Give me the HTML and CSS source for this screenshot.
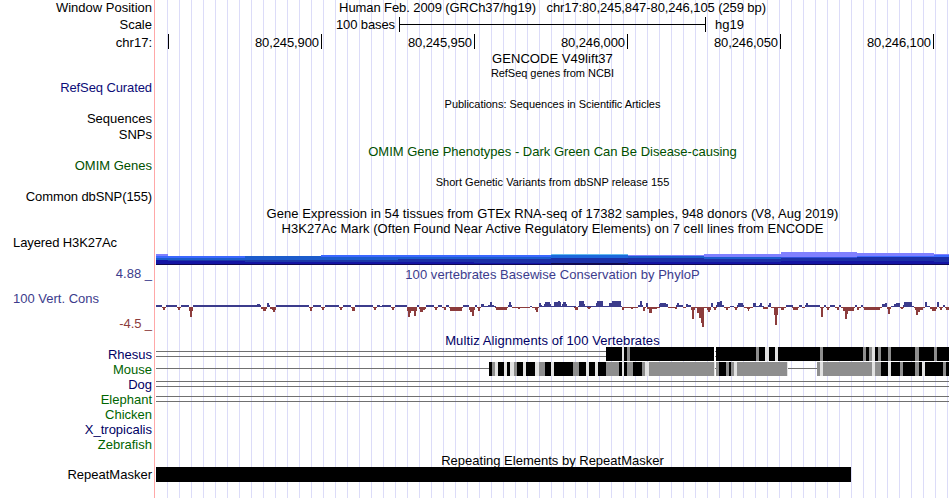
FILE: index.html
```html
<!DOCTYPE html>
<html lang="en">

<head>
    <meta charset="UTF-8">
    <meta name="viewport" content="width=device-width, initial-scale=1.0">
    <title>chr17:80,245,847-80,246,105</title>
    <link rel="stylesheet" href="styles.css">
</head>

<body>

    <div class="browser">
        <!-- left side labels -->
        <div class="labels">
            <div class="h16">Window Position</div>
            <div class="h18">Scale</div>
            <div class="h17">chr17:</div>
            <div class="h29"></div>
            <div class="h15 blue tight">RefSeq Curated</div>
            <div class="h16"></div>
            <div class="h15">Sequences</div>
            <div class="h17">SNPs</div>
            <div class="h15"></div>
            <div class="h15 omim">OMIM Genes</div>
            <div class="h16"></div>
            <div class="h15 tight">Common dbSNP(155)</div>
            <div class="h31"></div>
            <div class="h15 left tight">Layered H3K27Ac</div>
            <div class="h16"></div>
            <div class="h15 cons">4.88 _</div>
            <div class="h10"></div>
            <div class="h15 left cons">100 Vert. Cons</div>
            <div class="h10"></div>
            <div class="h15 neg tight">-4.5 _</div>
            <div class="h16"></div>
            <div class="h15 navy">Rhesus</div>
            <div class="h15 green">Mouse</div>
            <div class="h15 navy">Dog</div>
            <div class="h15 green">Elephant</div>
            <div class="h15 green">Chicken</div>
            <div class="h15 navy">X_tropicalis</div>
            <div class="h15 green">Zebrafish</div>
            <div class="h15"></div>
            <div class="h15">RepeatMasker</div>
        </div>

        <!-- track images -->
        <div class="tracks">
            <div class="h16 position">Human Feb. 2009 (GRCh37/hg19)   chr17:80,245,847-80,246,105 (259 bp)</div>
            <div class="h18 scale">
                <span class="scale-size">100 bases</span>
                <span class="scale-bar"></span>
                <span class="scale-db">hg19</span>
            </div>
            <div class="h17 ruler">
                <span class="tick first"></span>
                <span class="tick">80,245,900</span>
                <span class="tick">80,245,950</span>
                <span class="tick">80,246,000</span>
                <span class="tick">80,246,050</span>
                <span class="tick">80,246,100</span>
            </div>
            <div class="h15 wide">GENCODE V49lift37</div>
            <div class="h15 small">RefSeq genes from NCBI</div>
            <div class="h15"></div>
            <div class="h16 small">Publications: Sequences in Scientific Articles</div>
            <div class="h32"></div>
            <div class="h16 omim">OMIM Gene Phenotypes - Dark Green Can Be Disease-causing</div>
            <div class="h15"></div>
            <div class="h15 small snp">Short Genetic Variants from dbSNP release 155</div>
            <div class="h16"></div>
            <div class="h15 wide">Gene Expression in 54 tissues from GTEx RNA-seq of 17382 samples, 948 donors (V8, Aug 2019)</div>
            <div class="h15 wide">H3K27Ac Mark (Often Found Near Active Regulatory Elements) on 7 cell lines from ENCODE</div>
            <svg id="h3k27ac" width="793" height="31" viewBox="156 236 793 31"></svg>
            <div class="h15 wide cons">100 vertebrates Basewise Conservation by PhyloP</div>
            <svg id="phylop" width="793" height="51" viewBox="156 282 793 51"></svg>
            <div class="h14 navy multiz">Multiz Alignments of 100 Vertebrates</div>
            <svg id="rhesus" width="793" height="15" viewBox="156 347 793 15"></svg>
            <svg id="mouse" width="793" height="15" viewBox="156 362 793 15"></svg>
            <div class="h15 gap"></div>
            <div class="h15 gap"></div>
            <div class="h45"></div>
            <div class="h15 repeats">Repeating Elements by RepeatMasker</div>
            <div class="h15 repeat-item"></div>
        </div>
    </div>

    <script src="script.js"></script>

</body>

</html>
```

FILE: styles.css
```css
body {
    margin: 0;
    background-color: #fff;
    color: #000;
    font-family: "Liberation Sans", Arial, sans-serif;
    font-size: 13px;
    line-height: 15px;
}

.browser {
    display: flex;
    width: 950px;
    height: 498px;
    overflow: hidden;
}

.labels {
    box-sizing: border-box;
    width: 155px;
    padding-right: 2px;
    border-right: 1px solid #ffa8a8;
    text-align: right;
    white-space: nowrap;
}

/* vertical guidelines every 12px */
.tracks {
    width: 793px;
    margin-left: 1px;
    background: repeating-linear-gradient(to right, transparent 0 11px, #dcdcf8 11px 12px);
    text-align: center;
    white-space: nowrap;
}

.tracks svg {
    display: block;
    shape-rendering: crispEdges;
}

/* row heights */
.h10 { height: 10px; }
.h14 { height: 14px; }
.h15 { height: 15px; }
.h16 { height: 16px; line-height: 16px; }
.h17 { height: 17px; line-height: 17px; }
.h18 { height: 18px; line-height: 18px; }
.h29 { height: 29px; }
.h31 { height: 31px; }
.h32 { height: 32px; }
.h45 { height: 45px; }

.left {
    padding-left: 13px;
    text-align: left;
}

.small {
    font-size: 11px;
    letter-spacing: -0.04px;
}

.snp {
    letter-spacing: 0.01px;
}

.tight {
    letter-spacing: -0.1px;
}

.wide {
    letter-spacing: 0.05px;
}

/* track colors */
.blue { color: #0c0c78; }
.navy { color: #000064; }
.green { color: #006400; }
.omim { color: #005000; }
.cons { color: #3c3c8c; }
.neg { color: #8c3c3c; }

.position {
    letter-spacing: -0.09px;
    line-height: 15px;
    white-space: pre;
}

.scale {
    display: flex;
}

.scale-size {
    width: 239px;
    margin-right: 4px;
    letter-spacing: -0.1px;
    text-align: right;
}

.scale-bar {
    box-sizing: border-box;
    width: 307px;
    height: 15px;
    margin-top: 1px;
    border: solid #000;
    border-width: 0 1px;
    background: linear-gradient(#000, #000) 0 7px / 100% 1px no-repeat;
}

.scale-db {
    margin-left: 9px;
}

.ruler {
    display: flex;
}

.tick {
    box-sizing: border-box;
    width: 153px;
    height: 15px;
    padding-right: 2px;
    border-right: 1px solid #000;
    letter-spacing: -0.1px;
    text-align: right;
}

.first {
    width: 13px;
}

.multiz {
    letter-spacing: 0.1px;
}

/* double line where the species has no aligning bases */
.gap {
    background:
        linear-gradient(#707070, #707070) 0 4px / 100% 1px no-repeat,
        linear-gradient(#707070, #707070) 0 9px / 100% 1px no-repeat;
}

.repeats {
    line-height: 17px;
}

.repeat-item {
    width: 695px;
    background-color: #000;
}
```

FILE: script.js
```js
const SVG_NS = 'http://www.w3.org/2000/svg';

function addRect(svg, x, y, width, height, fill) {
    const rect = document.createElementNS(SVG_NS, 'rect');
    rect.setAttribute('x', x);
    rect.setAttribute('y', y);
    rect.setAttribute('width', width);
    rect.setAttribute('height', height);
    rect.setAttribute('fill', fill);
    svg.appendChild(rect);
}

// H3K27Ac: [start, end, [top of layer, color]...], every layer goes down to 265
const markLayers = [
    [156, 168, [254, '#8080ff'], [256, '#3c68ff'], [258, '#1c5ccc'], [260, '#1414a4']],
    [168, 245, [256, '#3c68ff'], [258, '#1c5ccc'], [260, '#1c38a8'], [261, '#1414a4']],
    [245, 321, [256, '#1c5ccc'], [260, '#1c38a8'], [262, '#1414a4']],
    [321, 398, [255, '#3c68ff'], [257, '#1c5ccc'], [260, '#1c38a8'], [262, '#1414a4']],
    [398, 474, [255, '#3c68ff'], [257, '#1c5ccc'], [259, '#1c30a8'], [262, '#1414a4']],
    [474, 551, [255, '#3c68ff'], [257, '#1c5ccc'], [259, '#1c30a8'], [263, '#1414a4']],
    [551, 628, [254, '#66bbee'], [255, '#1c68dc'], [258, '#1c30a8'], [263, '#100850']],
    [628, 704, [255, '#8080ff'], [256, '#1c5ccc'], [258, '#1c30a8'], [262, '#1414a4']],
    [704, 781, [254, '#8080ff'], [257, '#1c5ccc'], [259, '#1c30a8'], [262, '#1414a4']],
    [781, 857, [252, '#8080ff'], [257, '#3050dc'], [258, '#1c30a8'], [261, '#1414a4']],
    [857, 934, [253, '#8080ff'], [256, '#3c68ff'], [257, '#1c30a8'], [261, '#1414a4']],
    [934, 949, [254, '#8080ff'], [255, '#3c68ff'], [257, '#1c30a8'], [262, '#1414a4']]
];

const markSvg = document.getElementById('h3k27ac');
markLayers.forEach(function (item) {
    const [start, end, ...layers] = item;
    layers.forEach(function (layer) {
        addRect(markSvg, start, layer[0], end - start, 265 - layer[0], layer[1]);
    });
});
addRect(markSvg, 156, 264, 793, 1, '#100850');

// PhyloP scores: [x, width, height], negative goes below the axis
const scores = [
    [156, 6, 2], [162, 4, -1], [163, 2, -3], [166, 11, 2], [177, 4, -1], [178, 2, -3],
    [181, 8, 2], [189, 4, -4], [190, 2, -10], [193, 68, 2], [257, 3, 3], [261, 6, -2],
    [263, 3, -4], [267, 3, 2], [267, 2, 4], [270, 6, -2], [272, 4, -3], [273, 2, -5],
    [276, 33, 2], [309, 4, -1], [310, 2, -4], [313, 8, 2], [321, 4, -1], [322, 2, -3],
    [325, 14, 2], [339, 4, -1], [340, 2, -3], [343, 8, 2], [351, 4, -1], [352, 3, -4],
    [355, 18, 2], [373, 4, -1], [374, 2, -3], [377, 3, 2], [380, 2, 1], [382, 9, 2],
    [391, 4, -1], [392, 2, -3], [395, 12, 2], [407, 10, -4], [408, 2, -10], [410, 1, -6],
    [414, 2, -9], [417, 2, 2], [419, 7, -2], [420, 3, -5], [423, 2, -3], [426, 8, 2],
    [434, 4, -1], [435, 2, -3], [438, 4, 2], [442, 4, -1], [444, 2, -3], [446, 3, 2],
    [449, 14, -1], [450, 12, -4], [463, 6, 2], [469, 6, -3], [470, 4, -5], [472, 2, -9],
    [475, 2, 2], [477, 4, -1], [478, 2, -4], [481, 3, 3], [484, 12, 1], [488, 6, 2],
    [490, 2, 5], [495, 13, -1], [496, 11, -3], [508, 4, 2], [509, 2, 5], [512, 18, -1],
    [518, 2, -2], [530, 2, 1], [532, 7, -1], [535, 3, -3], [536, 2, -5], [539, 2, 4],
    [540, 2, 2], [542, 34, 1], [544, 7, 3], [545, 5, 5], [554, 7, 5], [558, 2, 6],
    [562, 5, 3], [563, 3, 5], [574, 4, -1], [575, 3, -3], [578, 44, 1], [579, 5, 6],
    [583, 2, 3], [587, 4, -1], [588, 2, -2], [596, 7, 4], [597, 6, 6], [609, 12, 4],
    [612, 9, 6], [622, 16, -1], [622, 2, -3], [631, 2, -2], [638, 5, 2], [640, 2, 6],
    [643, 3, -1], [643, 2, -4], [646, 2, 4], [647, 10, -2], [649, 3, -6], [657, 3, -1],
    [659, 9, 3], [660, 6, 4], [668, 8, -1], [675, 2, -2], [676, 7, 2], [677, 2, 4],
    [683, 3, -1], [686, 5, 2], [686, 2, 3], [691, 4, -3], [692, 2, -12], [695, 12, -1],
    [697, 7, -6], [699, 5, -11], [701, 3, -16], [702, 2, -20], [707, 4, -3], [708, 2, -5],
    [711, 2, 4], [713, 4, -1], [714, 2, -3], [716, 8, 2], [717, 5, 5], [720, 2, 6],
    [724, 6, -1], [726, 2, -3], [730, 4, 1], [734, 4, -1], [735, 2, -3], [737, 7, 2],
    [738, 5, 4], [744, 9, -1], [747, 3, -2], [748, 1, -4], [753, 3, 4], [756, 8, 1],
    [759, 3, 2], [760, 2, 4], [763, 5, -2], [768, 3, 2], [769, 2, 4], [771, 15, -1],
    [774, 4, -8], [775, 2, -18], [781, 3, -3], [786, 7, 2], [792, 7, -1], [793, 5, -3],
    [799, 3, 2], [802, 3, -1], [805, 15, 2], [806, 2, 4], [820, 4, -1], [821, 2, -10],
    [824, 2, 2], [826, 4, -1], [827, 2, -3], [830, 5, 2], [835, 4, -1], [837, 2, -3],
    [839, 2, 2], [841, 14, -1], [843, 11, -4], [845, 3, -7], [845, 2, -12], [855, 2, 2],
    [857, 4, -1], [857, 2, -3], [861, 2, 2], [863, 19, -1], [864, 16, -3], [882, 5, 3],
    [885, 2, 4], [887, 4, -2], [888, 2, -7], [891, 9, 1], [894, 6, 3], [896, 4, 4],
    [900, 4, -1], [901, 2, -2], [903, 9, 2], [904, 8, 5], [912, 2, 1], [914, 11, -1],
    [915, 8, -3], [916, 4, -5], [916, 2, -8], [925, 2, 5], [927, 3, 1], [930, 7, -2],
    [932, 4, -4], [937, 2, 5], [939, 4, -1], [940, 2, -3], [943, 2, 2], [945, 4, -1],
    [946, 3, -3]
];

const phylopSvg = document.getElementById('phylop');
scores.forEach(function (score) {
    const [x, width, height] = score;
    if (height > 0) {
        addRect(phylopSvg, x, 307 - height, width, height, '#3c3c8c');
    } else {
        addRect(phylopSvg, x, 307, width, -height, '#8c3c3c');
    }
});

// alignment blocks: [start, shade, start, shade, ..., end]
const K = '#000';
const G = '#8e8e8e';
const L = '#e2e2e2';

function drawBlocks(svg, y, blocks) {
    for (let i = 0; i < blocks.length - 1; i += 2) {
        addRect(svg, blocks[i], y, blocks[i + 2] - blocks[i], 14, blocks[i + 1]);
    }
}

const rhesusSvg = document.getElementById('rhesus');
addRect(rhesusSvg, 156, 351, 793, 1, '#707070');
addRect(rhesusSvg, 156, 356, 793, 1, '#707070');
drawBlocks(rhesusSvg, 347, [606, K, 622, L, 624, K, 627, G, 630, K, 714]);
addRect(rhesusSvg, 714, 347, 1, 14, '#fff');
drawBlocks(rhesusSvg, 347, [
    716, K, 756, G, 759, K, 765, L, 769, K, 775, L, 778, K, 820, G, 823, K, 863, G, 866,
    K, 869, G, 872, L, 875, K, 878, G, 881, K, 888, G, 891, K, 915, G, 919, K, 934, G,
    937, K, 949
]);

const mouseSvg = document.getElementById('mouse');
addRect(mouseSvg, 156, 368, 661, 1, '#707070');
drawBlocks(mouseSvg, 362, [
    489, K, 492, G, 495, L, 498, K, 504, L, 507, K, 510, L, 514, G, 517, K, 523, L, 526,
    K, 535, L, 539, G, 545, K, 551, L, 554, K, 573, G, 579, K, 586, L, 589, K, 595, L,
    598, K, 606, G, 619, K, 622, L, 624, K, 627, G, 633, K, 642, G, 645, L, 649, G, 714
]);
addRect(mouseSvg, 714, 362, 1, 14, L);
drawBlocks(mouseSvg, 362, [
    716, G, 719, K, 726, G, 729, K, 731, G, 734, L, 737, G, 787, L, 788
]);
drawBlocks(mouseSvg, 362, [
    817, G, 820, L, 823, G, 872, L, 875, G, 881, K, 888, L, 891, K, 900, G, 903, K, 915,
    G, 919, K, 922, L, 925, K, 943, G, 946, K, 949
]);
```
